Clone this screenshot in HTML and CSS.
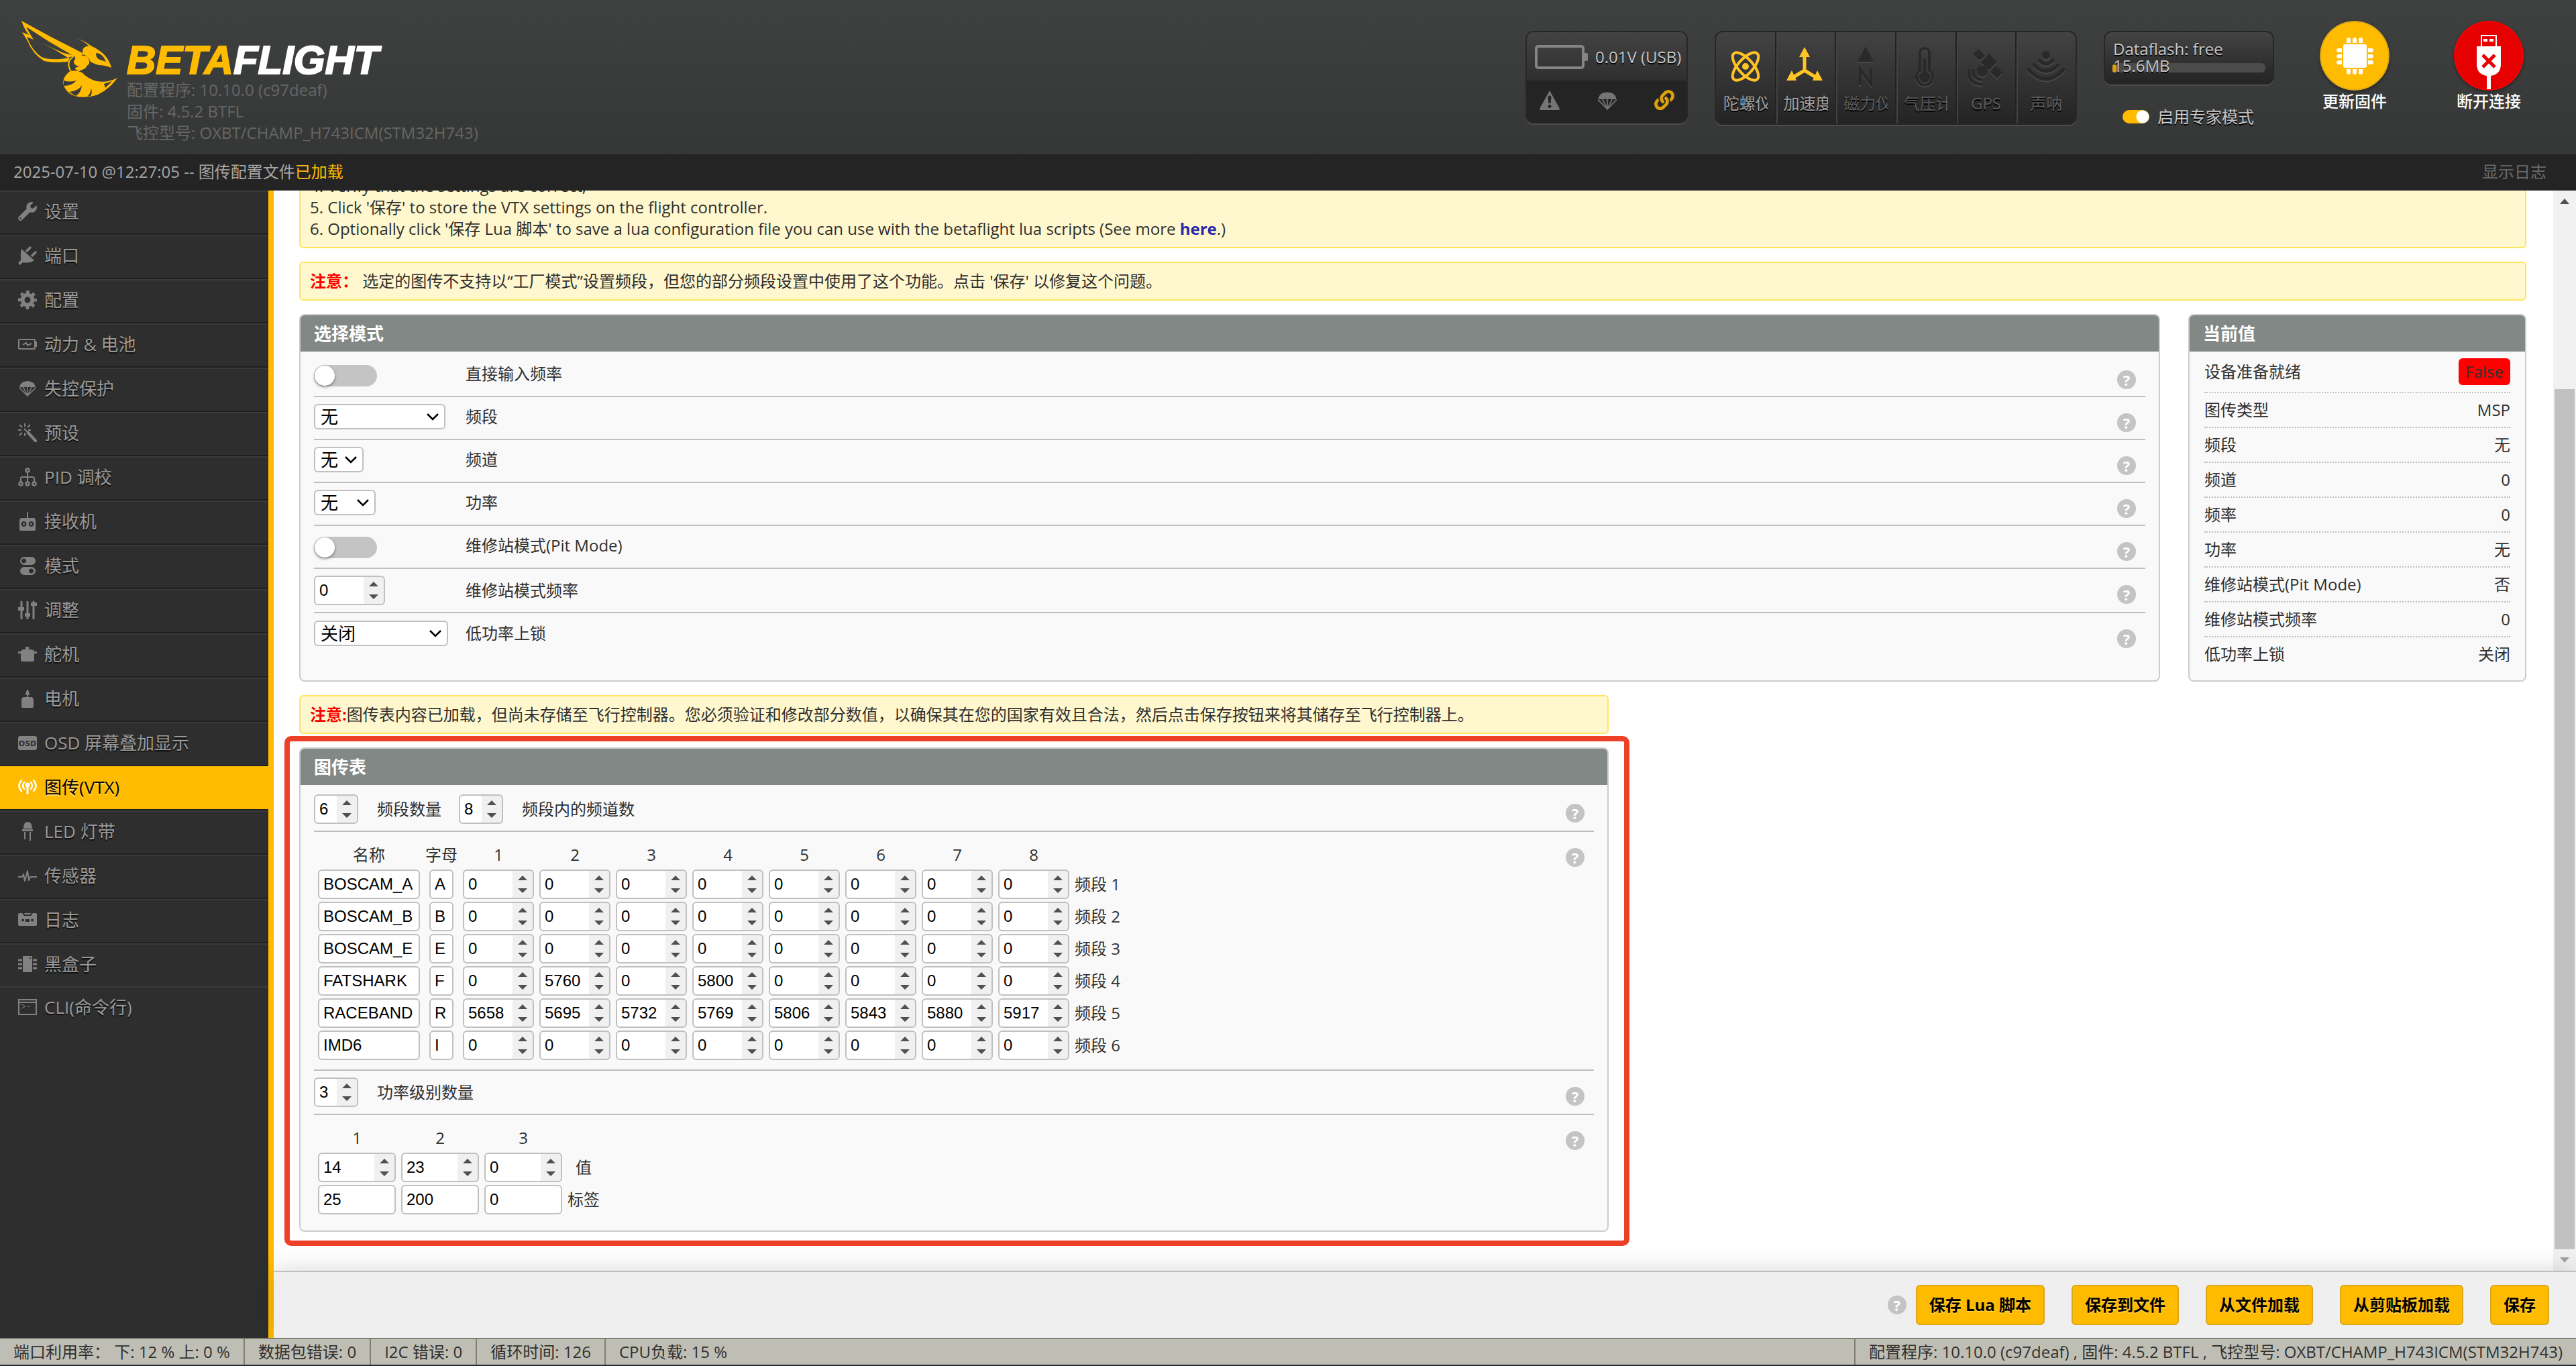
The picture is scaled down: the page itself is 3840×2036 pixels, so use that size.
FILE: index.html
```html
<!DOCTYPE html>
<html lang="zh-CN">
<head>
<meta charset="utf-8">
<title>Betaflight Configurator</title>
<link rel="stylesheet" href="styles.css">
</head>
<body>
<header class="header">
  <div class="brand">
    <svg class="bee" viewBox="30 30 148 118" aria-hidden="true">
      <path fill="#ffbb00" d="M32 31 L76 55 L125 80 L116 87 L73 62 L39 40 Q43 48 50 59 L40 55 Q48 76 62 85 Q76 91 104 86 L101 92 Q79 94 66 91 Q49 81 41 61 L33 48 L43 52 Q36 43 32 31Z"/>
      <path fill="#ffbb00" d="M61 64 L80 73 L101 86 L112 83 L95 79Z"/>
      <path fill="#ffbb00" fill-rule="evenodd" d="M112 56 Q126 61 137 69 Q161 80 166 101 Q156 97 147 97 Q137 94 134 91 Q132 84 124 81 Q121 73 127 70 Q130 68 133 69 Q125 61 112 56Z M143 79 Q143 87 149 89 L158 92 Q153 79 143 79Z"/>
      <path fill="#ffbb00" d="M112 84 Q122 81 130 84 Q134 90 133 95 Q129 98 127 102 L118 106 Q112 105 112 101 L118 99 Q109 97 110 91 Q113 88 112 84Z"/>
      <path fill="none" stroke="#ffbb00" stroke-width="2" d="M110 84 Q97 92 106 107"/>
      <path fill="#ffbb00" fill-rule="evenodd" d="M103 107 Q112 103 122 108 Q132 118 144 121 Q160 124 175 116 Q164 132 146 141 Q118 150 102 138 Q86 122 103 107Z M95 120 Q104 123 114 120 Q107 128 95 128Z M122 127 Q118 135 103 137 L113 143 Q121 138 122 127Z M136 132 Q135 140 130 144 L135 143 Q138 138 136 132Z M155 125 L167 121 L157 131Z"/>
    </svg>
    <div class="brand-text">
      <h1 class="wordmark"><span>BETA</span>FLIGHT</h1>
      <p>配置程序: 10.10.0 (c97deaf)<br>固件: 4.5.2 BTFL<br>飞控型号: OXBT/CHAMP_H743ICM(STM32H743)</p>
    </div>
  </div>

  <div class="power">
    <div class="power-top">
      <svg width="80" height="36" viewBox="0 0 80 36"><rect x="2" y="2" width="70" height="32" rx="3" fill="none" stroke="#858585" stroke-width="4"/><rect x="73" y="12" width="6" height="12" rx="2" fill="#858585"/></svg>
      <span>0.01V (USB)</span>
    </div>
    <div class="power-bottom">
      <svg width="32" height="32" viewBox="0 0 32 32"><path fill="#757575" fill-rule="evenodd" d="M16 1 L31 28 Q31 30 29 30 H3 Q1 30 1 28Z M13.500 10 Q16 7 18.500 10 L17.500 20 H14.500Z M16 22 a2.500 2.500 0 1 0 .1 0Z"/></svg>
      <svg width="32" height="32" viewBox="0 0 32 32"><use href="#chute" fill="#757575" color="#757575"/></svg>
      <svg width="30" height="30" viewBox="0 0 512 512"><path fill="#dca10c" d="M326.612 185.391c59.747 59.809 58.927 155.698.36 214.59-.11.12-.24.25-.36.37l-67.2 67.2c-59.27 59.27-155.699 59.262-214.96 0-59.27-59.26-59.27-155.7 0-214.96l37.106-37.106c9.84-9.84 26.786-3.3 27.294 10.606.648 17.722 3.826 35.527 9.69 52.721 1.986 5.822.567 12.262-3.783 16.612l-13.087 13.087c-28.026 28.026-28.905 73.66-1.155 101.96 28.024 28.579 74.086 28.749 102.325.51l67.2-67.19c28.191-28.191 28.073-73.757 0-101.83-3.701-3.694-7.429-6.564-10.341-8.569a16.037 16.037 0 0 1-6.947-12.606c-.396-10.567 3.348-21.456 11.698-29.806l21.054-21.055c5.521-5.521 14.182-6.199 20.584-1.731a152.482 152.482 0 0 1 20.522 17.197zM467.547 44.449c-59.261-59.262-155.69-59.27-214.96 0l-67.2 67.2c-.12.12-.25.25-.36.37-58.566 58.892-59.387 154.781.36 214.59a152.454 152.454 0 0 0 20.521 17.196c6.402 4.468 15.064 3.789 20.584-1.731l21.054-21.055c8.35-8.35 12.094-19.239 11.698-29.806a16.037 16.037 0 0 0-6.947-12.606c-2.912-2.005-6.64-4.875-10.341-8.569-28.073-28.073-28.191-73.639 0-101.83l67.2-67.19c28.239-28.239 74.3-28.069 102.325.51 27.75 28.3 26.872 73.934-1.155 101.96l-13.087 13.087c-4.35 4.35-5.769 10.79-3.783 16.612 5.864 17.194 9.042 34.999 9.69 52.721.509 13.906 17.454 20.446 27.294 10.606l37.106-37.106c59.271-59.259 59.271-155.699.001-214.959z"/></svg>
    </div>
  </div>

  <ul class="sensors">
    <li class="on"><svg viewBox="0 0 60 60"><g fill="none" stroke="currentColor" stroke-width="4"><ellipse cx="30" cy="30" rx="11" ry="26" transform="rotate(42 30 30)"/><ellipse cx="30" cy="30" rx="11" ry="26" transform="rotate(-42 30 30)"/></g><circle cx="30" cy="30" r="5" fill="currentColor"/></svg><span>陀螺仪</span></li>
    <li class="on"><svg viewBox="2 0 60 60"><path d="M30 8V36L10 48M30 36L50 48" fill="none" stroke="currentColor" stroke-width="5"/><path fill="currentColor" d="M30 1L38 16H22Z M3 51L11 36L18 51Z M57 51L49 36L42 51Z"/></svg><span>加速度</span></li>
    <li><svg viewBox="0 0 60 60"><path fill="currentColor" d="M30 0L42 23H18Z"/><path fill="none" stroke="currentColor" stroke-width="4" d="M22 58V34L38 57V32"/></svg><span>磁力仪</span></li>
    <li><svg viewBox="2 0 60 60"><path fill="none" stroke="currentColor" stroke-width="4" d="M23 36V10a7 7 0 0 1 14 0V36a12 12 0 1 1-14 0Z"/><circle cx="30" cy="46" r="8" fill="currentColor"/><path stroke="currentColor" stroke-width="4" d="M30 18V44"/></svg><span>气压计</span></li>
    <li><svg viewBox="0 0 60 60"><g fill="currentColor"><path d="M18 4L28 14L20 21L10 12Z"/><path d="M34 11L46 23L34 36L22 24Z"/><path d="M44 29L54 39L46 48L36 38Z"/><circle cx="24" cy="37" r="8"/></g><path fill="none" stroke="currentColor" stroke-width="4" d="M11 34Q8 48 24 50M4 34Q1 57 24 57"/></svg><span>GPS</span></li>
    <li><svg viewBox="0 0 60 60"><circle cx="30" cy="13" r="6" fill="currentColor"/><path fill="none" stroke="currentColor" stroke-width="5" stroke-linecap="round" d="M20 21Q30 31 40 21M12 28Q30 46 48 28M4 35Q30 63 56 35"/></svg><span>声呐</span></li>
  </ul>

  <div class="flash">
    <div class="flash-box">
      <div class="flash-bar"><div class="flash-fill"></div></div>
      <p>Dataflash: free<br>15.6MB</p>
    </div>
    <label class="expert"><input type="checkbox" class="mini-switch" checked>启用专家模式</label>
  </div>

  <div class="connect">
    <button type="button" class="round">
      <svg class="disc" viewBox="0 0 104 104"><circle cx="52" cy="52" r="51" fill="#ffbb00" stroke="#dba718" stroke-width="2"/><g fill="#fff"><rect x="35" y="35" width="35" height="35" rx="3"/><path d="M40 33v-5a3 3 0 0 1 6 0v5ZM49 33v-5a3 3 0 0 1 6 0v5ZM58 33v-5a3 3 0 0 1 6 0v5ZM40 72v5a3 3 0 0 0 6 0v-5ZM49 72v5a3 3 0 0 0 6 0v-5ZM58 72v5a3 3 0 0 0 6 0v-5ZM33 41h-5a3 3 0 0 0 0 6h5ZM33 50h-5a3 3 0 0 0 0 6h5ZM33 59h-5a3 3 0 0 0 0 6h5ZM72 41h5a3 3 0 0 1 0 6h-5ZM72 50h5a3 3 0 0 1 0 6h-5ZM72 59h5a3 3 0 0 1 0 6h-5Z"/></g></svg>
      <span>更新固件</span>
    </button>
    <button type="button" class="round">
      <svg class="disc" viewBox="0 0 104 104"><circle cx="52" cy="52" r="51" fill="#e60000" stroke="#ff0000" stroke-width="2"/><path fill="#fff" fill-rule="evenodd" d="M40 21H64V38H70V66Q69 80 55 82V102H49V82Q35 80 34 66V38H40Z M42 23V38H62V23Z"/><path fill="#fff" d="M44 27h6v4h-6ZM53 27h6v4h-6Z"/><path stroke="#e60000" stroke-width="5" d="M43 51L61 69M61 51L43 69"/></svg>
      <span>断开连接</span>
    </button>
  </div>
</header>

<div class="log">
  <p>2025-07-10 @12:27:05 -- 图传配置文件<em>已加载</em></p>
  <a href="#log">显示日志</a>
</div>

<svg class="defs" width="0" height="0" aria-hidden="true">
  <symbol id="chute" viewBox="0 0 28 28"><path d="M2 13Q3 3 14 3Q25 3 26 13Q23 11 20 13Q17 10 14 13Q11 10 8 13Q5 11 2 13Z"/><path fill="none" stroke="currentColor" stroke-width="1.500" d="M2 13L14 25L26 13M8 13L14 25L20 13M14 13V25"/></symbol>
</svg>

<div class="workspace">
<nav class="sidebar">
  <a href="#setup"><svg viewBox="0 0 512 512"><path d="M507.73 109.1c-2.24-9.03-13.54-12.09-20.12-5.51l-74.36 74.36-67.88-11.31-11.31-67.88 74.36-74.36c6.62-6.62 3.43-17.9-5.66-20.16-47.38-11.74-99.55.91-136.58 37.93-39.64 39.64-50.55 97.1-34.05 147.2L18.74 402.76c-24.99 24.99-24.99 65.51 0 90.5 24.99 24.99 65.51 24.99 90.5 0l213.21-213.21c50.12 16.71 107.47 5.68 147.37-34.22 37.07-37.07 49.7-89.32 37.91-136.73zM64 472c-13.25 0-24-10.75-24-24 0-13.26 10.75-24 24-24s24 10.74 24 24c0 13.25-10.75 24-24 24z"/></svg>设置</a>
  <a href="#ports"><svg viewBox="0 0 28 28"><path d="M5 4L24 21Q17 26 7 24L3 28L0 25L4 21Q3 12 5 4Z"/><path stroke="currentColor" stroke-width="3.500" stroke-linecap="round" d="M13 7L18 2M21 14L26 9"/></svg>端口</a>
  <a href="#config"><svg viewBox="0 0 28 28"><g fill="none" stroke="currentColor"><circle cx="14" cy="14" r="7.500" stroke-width="6"/><circle cx="14" cy="14" r="12" stroke-width="4" stroke-dasharray="4.712 4.712" stroke-dashoffset="2.356"/></g></svg>配置</a>
  <a href="#power"><svg viewBox="0 0 28 28"><rect x="1" y="7" width="24" height="14" rx="1" fill="none" stroke="currentColor" stroke-width="2"/><rect x="25" y="10" width="3" height="8"/><path fill="none" stroke="currentColor" stroke-width="2" d="M7 15L12 12L14 16L20 13"/></svg>动力 &amp; 电池</a>
  <a href="#failsafe"><svg viewBox="0 0 28 28"><use href="#chute"/></svg>失控保护</a>
  <a href="#presets"><svg viewBox="0 0 28 28"><path stroke="currentColor" stroke-width="4.500" stroke-linecap="round" d="M15 14L26 26"/><path fill="none" stroke="currentColor" stroke-width="2" d="M9 8L15 14M10 0V5M10 14V19M0 10H5M15 10H19M2 2L6 6M18 2L14 6M2 18L6 14"/></svg>预设</a>
  <a href="#pid"><svg viewBox="0 0 28 28"><g fill="none" stroke="currentColor" stroke-width="2.500"><circle cx="14" cy="4" r="2.500"/><circle cx="4" cy="24" r="2.500"/><circle cx="14" cy="24" r="2.500"/><circle cx="24" cy="24" r="2.500"/><path stroke-width="2" d="M14 7V21M4 21V16Q4 14 6 14H22Q24 14 24 16V21"/></g></svg>PID 调校</a>
  <a href="#receiver"><svg viewBox="0 0 28 28"><path fill-rule="evenodd" d="M13 0H15V9H24Q26 10 26 13V26Q26 28 24 28H4Q2 28 2 26V13Q2 10 5 9H13ZM8.500 14a4 4 0 1 0 .1 0ZM19.500 14a4 4 0 1 0 .1 0Z"/><circle cx="8.500" cy="18" r="1.500"/><circle cx="19.500" cy="18" r="1.500"/></svg>接收机</a>
  <a href="#modes"><svg viewBox="0 0 28 28"><path fill-rule="evenodd" d="M9 1H20a6 6 0 0 1 0 12H9a6 6 0 0 1 0-12ZM8.500 3.500a3.500 3.500 0 1 0 .1 0ZM9 16H20a6 6 0 0 1 0 12H9a6 6 0 0 1 0-12ZM19.500 18.500a3.500 3.500 0 1 0 .1 0Z"/></svg>模式</a>
  <a href="#adjust"><svg viewBox="0 0 28 28"><path fill="none" stroke="currentColor" stroke-width="3" stroke-linecap="round" d="M5 2V27M14 2V27M23 2V27"/><path d="M0 10H9V15H0ZM10 19H18V24H10ZM19 3H28V8H19Z"/></svg>调整</a>
  <a href="#servos"><svg viewBox="0 0 28 28"><path d="M0 10H4Q5 7 9 7H11V3H16V7H19Q23 7 24 10H28V13H24V22Q24 25 21 25H7Q4 25 4 22V13H0Z"/></svg>舵机</a>
  <a href="#motors"><svg viewBox="0 0 28 28"><path d="M14 0Q17 4 17 9H15V12H20Q23 13 23 16V26Q23 28 21 28H7Q5 28 5 26V16Q5 13 8 12H13V9H11Q11 4 14 0Z"/></svg>电机</a>
  <a href="#osd"><svg viewBox="0 0 28 28"><rect y="4" width="28" height="21" rx="3"/><text x="14" y="19" class="osd-mark" text-anchor="middle">OSD</text></svg>OSD 屏幕叠加显示</a>
  <a href="#vtx" class="active" aria-current="page"><svg viewBox="0 0 28 28"><path fill="none" stroke="currentColor" stroke-width="2.500" stroke-linecap="round" d="M9 7Q5 12 9 17M5 4Q-2 12 5 20M19 7Q23 12 19 17M23 4Q30 12 23 20"/><circle cx="14" cy="11" r="3.500"/><rect x="12.500" y="12" width="3" height="13"/></svg>图传(VTX)</a>
  <a href="#led"><svg viewBox="0 0 28 28"><path d="M8 10Q8 0 14 0Q21 0 21 10ZM6 11H22V14H6ZM9 15H11V26H9ZM17 15H19V28H17Z"/></svg>LED 灯带</a>
  <a href="#sensors"><svg viewBox="0 0 28 28"><path fill="none" stroke="currentColor" stroke-width="2" stroke-linejoin="round" d="M0 16H6L8 12L10 22L14 7L16 21L18 16H28"/></svg>传感器</a>
  <a href="#logging"><svg viewBox="0 0 28 28"><path fill-rule="evenodd" d="M2 4H6L9 8H19L22 4H26Q28 4 28 6V21Q28 23 26 23H2Q0 23 0 21V6Q0 4 2 4ZM7 12.500a2 2 0 1 0 .1 0ZM11 13V17H17V13ZM21 12.500a2 2 0 1 0 .1 0Z"/><path d="M9 4H19L18 6H10Z"/></svg>日志</a>
  <a href="#blackbox"><svg viewBox="0 0 28 28"><path fill-rule="evenodd" d="M7 2H21V26H7ZM17 4V6H19V4Z"/><path stroke="currentColor" stroke-width="3" d="M0 8H6M0 14H6M0 20H6M22 8H28M22 14H28M22 20H28"/></svg>黑盒子</a>
  <a href="#cli"><svg viewBox="0 0 28 28"><path fill="none" stroke="currentColor" stroke-width="2" d="M1 3H27V25H1ZM1 7H27"/><path fill="none" stroke="currentColor" d="M5 10L11 13L5 16M14 13H18"/></svg>CLI(命令行)</a>
</nav>

<main class="content">
  <div class="scroller">
    <div class="page">
      <div class="note">
        <p>4. Verify that the settings are correct;</p>
        <p>5. Click '保存' to store the VTX settings on the flight controller.</p>
        <p>6. Optionally click '保存 Lua 脚本' to save a lua configuration file you can use with the betaflight lua scripts (See more <a href="#here">here</a>.)</p>
      </div>
      <div class="note"><p><strong>注意：</strong> 选定的图传不支持以“工厂模式”设置频段，但您的部分频段设置中使用了这个功能。点击 '保存' 以修复这个问题。</p></div>

      <div class="columns">
        <section class="panel">
          <h2>选择模式</h2>
          <div class="rows">
            <div class="row"><div class="ctl"><input type="checkbox" class="switch" id="direct"></div><label for="direct">直接输入频率</label><span class="help">?</span></div>
            <div class="row"><div class="ctl"><select id="band" class="w196"><option>无</option></select></div><label for="band">频段</label><span class="help">?</span></div>
            <div class="row"><div class="ctl"><select id="channel" class="w74"><option>无</option></select></div><label for="channel">频道</label><span class="help">?</span></div>
            <div class="row"><div class="ctl"><select id="pwr" class="w92"><option>无</option></select></div><label for="pwr">功率</label><span class="help">?</span></div>
            <div class="row"><div class="ctl"><input type="checkbox" class="switch" id="pit"></div><label for="pit">维修站模式(Pit Mode)</label><span class="help">?</span></div>
            <div class="row tall"><div class="ctl"><input type="number" id="pitfreq" class="w106" value="0"></div><label for="pitfreq">维修站模式频率</label><span class="help">?</span></div>
            <div class="row"><div class="ctl"><select id="disarm" class="w200"><option>关闭</option></select></div><label for="disarm">低功率上锁</label><span class="help">?</span></div>
          </div>
        </section>

        <section class="panel">
          <h2>当前值</h2>
          <dl class="values">
            <div class="first"><dt>设备准备就绪</dt><dd class="badge">False</dd></div>
            <div><dt>图传类型</dt><dd>MSP</dd></div>
            <div><dt>频段</dt><dd>无</dd></div>
            <div><dt>频道</dt><dd>0</dd></div>
            <div><dt>频率</dt><dd>0</dd></div>
            <div><dt>功率</dt><dd>无</dd></div>
            <div><dt>维修站模式(Pit Mode)</dt><dd>否</dd></div>
            <div><dt>维修站模式频率</dt><dd>0</dd></div>
            <div><dt>低功率上锁</dt><dd>关闭</dd></div>
          </dl>
        </section>
      </div>

      <div class="table-area">
        <div class="note"><p><strong>注意:</strong>图传表内容已加载，但尚未存储至飞行控制器。您必须验证和修改部分数值，以确保其在您的国家有效且合法，然后点击保存按钮来将其储存至飞行控制器上。</p></div>
        <section class="panel marked">
          <h2>图传表</h2>
          <div class="rows">
            <div class="row tall">
              <div class="counts">
                <input type="number" class="w66" id="bands" value="6"><label for="bands">频段数量</label>
                <input type="number" class="w66" id="channels" value="8"><label for="channels">频段内的频道数</label>
              </div>
              <span class="help">?</span>
            </div>
            <div class="row grid-row">
              <table class="bands">
                <thead><tr><th>名称</th><th>字母</th><th>1</th><th>2</th><th>3</th><th>4</th><th>5</th><th>6</th><th>7</th><th>8</th><th></th></tr></thead>
                <tbody>
                  <tr><td><input type="text" aria-label="名称 1" value="BOSCAM_A"></td><td><input type="text" aria-label="字母 1" value="A"></td><td><input type="number" aria-label="1-1" value="0"></td><td><input type="number" aria-label="1-2" value="0"></td><td><input type="number" aria-label="1-3" value="0"></td><td><input type="number" aria-label="1-4" value="0"></td><td><input type="number" aria-label="1-5" value="0"></td><td><input type="number" aria-label="1-6" value="0"></td><td><input type="number" aria-label="1-7" value="0"></td><td><input type="number" aria-label="1-8" value="0"></td><td>频段 1</td></tr>
                  <tr><td><input type="text" aria-label="名称 2" value="BOSCAM_B"></td><td><input type="text" aria-label="字母 2" value="B"></td><td><input type="number" aria-label="2-1" value="0"></td><td><input type="number" aria-label="2-2" value="0"></td><td><input type="number" aria-label="2-3" value="0"></td><td><input type="number" aria-label="2-4" value="0"></td><td><input type="number" aria-label="2-5" value="0"></td><td><input type="number" aria-label="2-6" value="0"></td><td><input type="number" aria-label="2-7" value="0"></td><td><input type="number" aria-label="2-8" value="0"></td><td>频段 2</td></tr>
                  <tr><td><input type="text" aria-label="名称 3" value="BOSCAM_E"></td><td><input type="text" aria-label="字母 3" value="E"></td><td><input type="number" aria-label="3-1" value="0"></td><td><input type="number" aria-label="3-2" value="0"></td><td><input type="number" aria-label="3-3" value="0"></td><td><input type="number" aria-label="3-4" value="0"></td><td><input type="number" aria-label="3-5" value="0"></td><td><input type="number" aria-label="3-6" value="0"></td><td><input type="number" aria-label="3-7" value="0"></td><td><input type="number" aria-label="3-8" value="0"></td><td>频段 3</td></tr>
                  <tr><td><input type="text" aria-label="名称 4" value="FATSHARK"></td><td><input type="text" aria-label="字母 4" value="F"></td><td><input type="number" aria-label="4-1" value="0"></td><td><input type="number" aria-label="4-2" value="5760"></td><td><input type="number" aria-label="4-3" value="0"></td><td><input type="number" aria-label="4-4" value="5800"></td><td><input type="number" aria-label="4-5" value="0"></td><td><input type="number" aria-label="4-6" value="0"></td><td><input type="number" aria-label="4-7" value="0"></td><td><input type="number" aria-label="4-8" value="0"></td><td>频段 4</td></tr>
                  <tr><td><input type="text" aria-label="名称 5" value="RACEBAND"></td><td><input type="text" aria-label="字母 5" value="R"></td><td><input type="number" aria-label="5-1" value="5658"></td><td><input type="number" aria-label="5-2" value="5695"></td><td><input type="number" aria-label="5-3" value="5732"></td><td><input type="number" aria-label="5-4" value="5769"></td><td><input type="number" aria-label="5-5" value="5806"></td><td><input type="number" aria-label="5-6" value="5843"></td><td><input type="number" aria-label="5-7" value="5880"></td><td><input type="number" aria-label="5-8" value="5917"></td><td>频段 5</td></tr>
                  <tr><td><input type="text" aria-label="名称 6" value="IMD6"></td><td><input type="text" aria-label="字母 6" value="I"></td><td><input type="number" aria-label="6-1" value="0"></td><td><input type="number" aria-label="6-2" value="0"></td><td><input type="number" aria-label="6-3" value="0"></td><td><input type="number" aria-label="6-4" value="0"></td><td><input type="number" aria-label="6-5" value="0"></td><td><input type="number" aria-label="6-6" value="0"></td><td><input type="number" aria-label="6-7" value="0"></td><td><input type="number" aria-label="6-8" value="0"></td><td>频段 6</td></tr>
                </tbody>
              </table>
              <span class="help">?</span>
            </div>
            <div class="row tall">
              <div class="counts"><input type="number" class="w66" id="levels" value="3"><label for="levels">功率级别数量</label></div>
              <span class="help">?</span>
            </div>
            <div class="row grid-row">
              <table class="levels">
                <thead><tr><th>1</th><th>2</th><th>3</th><th></th></tr></thead>
                <tbody>
                  <tr><td><input type="number" aria-label="值 1" value="14"></td><td><input type="number" aria-label="值 2" value="23"></td><td><input type="number" aria-label="值 3" value="0"></td><td>值</td></tr>
                  <tr><td><input type="text" aria-label="标签 1" value="25"></td><td><input type="text" aria-label="标签 2" value="200"></td><td><input type="text" aria-label="标签 3" value="0"></td><td>标签</td></tr>
                </tbody>
              </table>
              <span class="help">?</span>
            </div>
          </div>
        </section>
      </div>
    </div>
    <div class="scrollbar" aria-hidden="true">
      <svg width="14" height="8" viewBox="0 0 14 8"><path fill="#505050" d="M0 8L7 0L14 8Z"/></svg>
      <div class="thumb"></div>
      <svg width="14" height="8" viewBox="0 0 14 8"><path fill="#a3a3a3" d="M0 0H14L7 8Z"/></svg>
    </div>
  </div>
  <div class="toolbar">
    <span class="help">?</span>
    <button type="button">保存 Lua 脚本</button>
    <button type="button">保存到文件</button>
    <button type="button">从文件加载</button>
    <button type="button">从剪贴板加载</button>
    <button type="button">保存</button>
  </div>
</main>
</div>

<footer class="status">
  <span>端口利用率： 下: 12 % 上: 0 %</span>
  <span>数据包错误: 0</span>
  <span>I2C 错误: 0</span>
  <span>循环时间: 126</span>
  <span>CPU负载: 15 %</span>
  <span class="version">配置程序: 10.10.0 (c97deaf) , 固件: 4.5.2 BTFL , 飞控型号: OXBT/CHAMP_H743ICM(STM32H743)</span>
</footer>
</body>
</html>
```

FILE: styles.css
```css
* { box-sizing: border-box; }

body {
  margin: 0;
  height: 100vh;
  display: flex;
  flex-direction: column;
  overflow: hidden;
  background: #fff;
  color: #303030;
  font: 24px/32px "Open Sans", "Noto Sans CJK SC", sans-serif;
}

h1, h2, p, ul, dl, dd { margin: 0; padding: 0; }
a { text-decoration: none; }
.defs { position: absolute; }

/* header */
.header {
  flex: none;
  height: 230px;
  display: flex;
  align-items: flex-start;
  padding: 46px 78px 0 30px;
  background: linear-gradient(#3f4140, #353736);
}

.brand { display: flex; margin: -16px auto 0 0; }
.bee { width: 148px; height: 118px; margin-right: 11px; }
.brand-text { padding-top: 28px; color: #666; }
.brand-text p { white-space: nowrap; }

.wordmark {
  height: 60px;
  color: #fff;
  font: italic bold 60px/64px "Liberation Sans", sans-serif;
  -webkit-text-stroke: 2px currentColor;
}
.wordmark span { color: #ffbb00; }

.power, .sensors, .flash-box {
  border: 2px solid #272727;
  border-radius: 12px;
  background: linear-gradient(#434343, #242424);
  box-shadow: 0 2px 0 #4c4c4c;
  color: #c6c6c6;
  text-shadow: 0 2px 0 #000;
}

.power { width: 242px; height: 138px; margin-right: 40px; overflow: hidden; }
.power-top {
  height: 72px;
  display: flex;
  align-items: center;
  gap: 10px;
  padding: 2px 0 0 12px;
  white-space: nowrap;
  background: linear-gradient(#434343, #2f2f2f);
}
.power-bottom {
  height: 62px;
  display: flex;
  align-items: flex-start;
  justify-content: space-between;
  padding: 14px 18px;
  background: #242424;
}

.sensors {
  width: 540px;
  height: 140px;
  margin-right: 40px;
  display: flex;
  list-style: none;
}
.sensors li {
  flex: 1;
  display: flex;
  flex-direction: column;
  align-items: center;
  padding-top: 21px;
  color: #292929;
  border-left: 2px solid #222;
  box-shadow: inset 2px 0 0 #434343;
}
.sensors li:first-child { border-left: 0; box-shadow: none; }
.sensors svg { width: 60px; height: 60px; margin-bottom: 9px; filter: drop-shadow(0 2px 0 #484848); }
.sensors span {
  width: 66px;
  overflow: hidden;
  white-space: nowrap;
  text-align: center;
  color: #5a5a5a;
}
.sensors .on { color: #ffc524; }
.sensors .on svg { filter: none; }
.sensors .on span { color: #a0a0a0; }

.flash { width: 254px; margin-right: 68px; }
.flash-box { position: relative; height: 80px; padding: 12px; line-height: 25px; }
.flash-box p { position: relative; }
.flash-bar {
  position: absolute;
  left: 11px;
  right: 11px;
  top: 46px;
  height: 14px;
  border-radius: 6px;
  background: #4b4b4b;
}
.flash-fill { width: 6px; height: 12px; margin-top: 2px; border-radius: 3px; background: #dca10c; }
.expert {
  display: flex;
  align-items: center;
  gap: 12px;
  margin: 32px 0 0 28px;
  color: #c6c6c6;
  text-shadow: 0 2px 0 #000;
}

.mini-switch {
  appearance: none;
  width: 40px;
  height: 20px;
  margin: 0;
  border-radius: 10px;
  background: radial-gradient(circle at 30px 10px, #fff 9px, #ffbb00 10px);
}

.connect { display: flex; gap: 96px; margin-top: -15px; }
.round {
  width: 104px;
  padding: 0;
  border: 0;
  background: none;
  color: #fff;
  font: 500 24px/32px "Open Sans", "Noto Sans CJK SC", sans-serif;
  text-align: center;
  white-space: nowrap;
}
.disc { display: block; width: 104px; height: 104px; border-radius: 52px; box-shadow: 0 2px 4px rgba(0, 0, 0, .4); }
.round span { display: block; }

/* log line */
.log {
  flex: none;
  height: 54px;
  display: flex;
  align-items: center;
  justify-content: space-between;
  padding: 0 44px 2px 20px;
  background: #242424;
  color: #a6a6a6;
}
.log em { font-style: normal; color: #ffbb00; }
.log a { color: #6b6b6b; }

/* sidebar */
.workspace { flex: 1; min-height: 0; display: flex; }

.sidebar {
  flex: none;
  width: 408px;
  border-right: 8px solid #ffbb00;
  background: #2e2e2e;
}
.sidebar a {
  height: 66px;
  display: flex;
  align-items: center;
  gap: 11px;
  padding: 0 0 4px 27px;
  border-top: 2px solid #3a3a3a;
  border-bottom: 2px solid #202020;
  color: #999;
  font-size: 26px;
  text-shadow: 0 2px 1px rgba(0, 0, 0, .7);
}
.sidebar a:nth-last-child(2) { height: 64px; border-bottom: 0; }
.sidebar a:last-child { height: 64px; border-bottom: 0; }
.sidebar svg { width: 28px; height: 28px; fill: #818181; color: #818181; }
.osd-mark { font: bold 11px "DejaVu Sans", sans-serif; fill: #2e2e2e; text-shadow: none; }
.sidebar .active {
  border-top-color: #ffbb00;
  background: #ffbb00;
  color: #000;
  text-shadow: 0 2px 0 rgba(255, 255, 255, .45);
}
.sidebar .active svg { fill: #fff; color: #fff; }

/* content */
.content { flex: 1; min-width: 0; display: flex; flex-direction: column; }
.scroller { flex: 1; min-height: 0; display: flex; overflow: hidden; }

.page {
  flex: 1;
  min-width: 0;
  display: flex;
  flex-direction: column;
  justify-content: flex-end;
  gap: 20px;
  padding: 0 40px 58px 38px;
}

.scrollbar {
  flex: none;
  width: 34px;
  display: flex;
  flex-direction: column;
  align-items: center;
  justify-content: space-between;
  padding: 12px 0;
  background: #f1f1f1;
}
.thumb { width: 30px; flex: 1; margin: 276px 0 12px; background: #c1c1c1; }

.note {
  padding: 11px 14px;
  border: 2px solid #ffe55f;
  border-radius: 6px;
  background: #fff7cd;
}
.note strong { color: #f00; }
.note a { color: #2929aa; font-weight: bold; }

.columns { display: grid; grid-template-columns: 1fr 504px; gap: 42px; }
.table-area { width: 1952px; display: flex; flex-direction: column; gap: 20px; }

.panel {
  border: 2px solid #ccc;
  border-radius: 8px;
  background: #f9f9f9;
}
.panel h2 {
  height: 54px;
  padding: 0 20px;
  border-radius: 6px 6px 0 0;
  background: #828885;
  color: #fff;
  font-size: 26px;
  line-height: 54px;
}
.marked { position: relative; }
.marked::after {
  content: "";
  position: absolute;
  inset: -19px -33px -23px -24px;
  border: 8px solid #ed4127;
  border-radius: 10px;
  pointer-events: none;
}

.rows { padding: 4px 20px 0; }
.row {
  min-height: 64px;
  display: flex;
  align-items: center;
  padding: 8px 14px 12px 0;
  border-bottom: 2px solid #bfbfbf;
}
.row.tall { padding-top: 10px; padding-bottom: 10px; }
.row:last-child { border-bottom: 0; }
.ctl { width: 226px; display: flex; }
.row .help { align-self: flex-start; margin: 16px 0 -16px auto; }
.row.tall .help { margin: 14px 0 -14px auto; }

.help {
  flex: none;
  width: 28px;
  height: 28px;
  border-radius: 14px;
  background: #c4c4c4;
  color: #fff;
  font-size: 22px;
  font-weight: bold;
  line-height: 28px;
  text-align: center;
}

select, input[type="number"], input[type="text"] {
  appearance: none;
  margin: 0;
  border: 2px solid #c0c0c0;
  border-radius: 6px;
  background: #fff;
  color: #000;
}
select {
  height: 38px;
  padding: 0 8px;
  font: 26px/34px "Open Sans", "Noto Sans CJK SC", sans-serif;
  background: #fff url("data:image/svg+xml,%3Csvg xmlns='http://www.w3.org/2000/svg' width='18' height='12'%3E%3Cpath d='M1 2L9 10L17 2' fill='none' stroke='%23000' stroke-width='2.500'/%3E%3C/svg%3E") no-repeat right 8px center;
}
input[type="number"], input[type="text"] {
  display: block;
  height: 44px;
  padding: 0 6px;
  font: 24px/40px "Liberation Sans", sans-serif;
}
input[type="number"] {
  background: #fff url("data:image/svg+xml,%3Csvg xmlns='http://www.w3.org/2000/svg' width='30' height='40'%3E%3Cpath d='M0 0H30V40H0Z' fill='%23f0f0f0'/%3E%3Cpath d='M8 14L15 7L22 14ZM8 26L15 33L22 26Z' fill='%23505050'/%3E%3C/svg%3E") no-repeat right center;
}
input[type="number"]::-webkit-inner-spin-button { appearance: none; width: 24px; margin: 0; }

.w66 { width: 66px; }
.w74 { width: 74px; }
.w92 { width: 92px; }
.w106 { width: 106px; }
.w196 { width: 196px; }
.w200 { width: 200px; }

.switch {
  appearance: none;
  width: 94px;
  height: 32px;
  margin: 6px 0 0;
  border-radius: 16px;
  background: #c4c4c4;
}
.switch::before {
  content: "";
  display: block;
  width: 30px;
  height: 30px;
  margin: 1px;
  border-radius: 15px;
  background: #fff;
  box-shadow: 0 2px 4px rgba(0, 0, 0, .4);
}

.counts { display: flex; align-items: center; }
.counts label { margin: 0 26px 0 28px; }

.row.grid-row { padding-top: 14px; padding-bottom: 12px; }
.row.grid-row:last-child { padding-bottom: 22px; }
.row.grid-row .help { margin-top: 10px; }

table { margin-left: 2px; border-collapse: collapse; table-layout: fixed; }
th { height: 40px; padding: 0; font-weight: normal; }
td { height: 48px; padding: 2px 4px; text-align: center; }
td input[type] { width: 100%; }
.bands { width: 1220px; }
.bands th { width: 114px; }
.bands th:first-child { width: 160px; }
.bands th:nth-child(2) { width: 56px; }
.bands td:nth-child(2) { padding: 2px 10px; }
.bands th:last-child { width: 92px; }
.bands td:last-child { text-align: left; }
.levels { width: 428px; }
.levels th { width: 124px; }
.levels th:last-child { width: 56px; }

/* current values */
.values { padding: 10px 22px 12px; }
.values div {
  height: 52px;
  display: flex;
  align-items: center;
  justify-content: space-between;
  border-bottom: 2px dotted #bfbfbf;
}
.values div:last-child { border-bottom-color: transparent; }
.values .first { padding-bottom: 10px; }
.badge { padding: 4px 10px; border-radius: 6px; background: #f00; }

/* toolbar */
.toolbar {
  position: relative;
  flex: none;
  height: 100px;
  display: flex;
  align-items: center;
  justify-content: flex-end;
  gap: 40px;
  padding-right: 40px;
  border-top: 2px solid #bfbfbf;
  background: #efefef;
  box-shadow: 0 0 36px rgba(0, 0, 0, .16);
}
.toolbar .help { margin-right: -26px; }
.toolbar button {
  height: 60px;
  padding: 0 18px;
  border: 2px solid #dba718;
  border-radius: 6px;
  background: #ffbb00;
  color: #000;
  font: bold 24px/32px "Open Sans", "Noto Sans CJK SC", sans-serif;
  text-shadow: 0 2px 0 rgba(255, 255, 255, .3);
}

/* status bar */
.status {
  position: relative;
  flex: none;
  height: 42px;
  display: flex;
  align-items: stretch;
  border-top: 2px solid #7d8073;
  border-bottom: 2px solid #22303a;
  background: #bfbeb4;
}
.status span {
  padding: 0 20px;
  border-right: 2px solid #7d8073;
  line-height: 38px;
  white-space: nowrap;
}
.status span:nth-child(5) { border-right: 0; }
.status .version { margin-left: auto; border-left: 2px solid #7d8073; border-right: 0; }
```
